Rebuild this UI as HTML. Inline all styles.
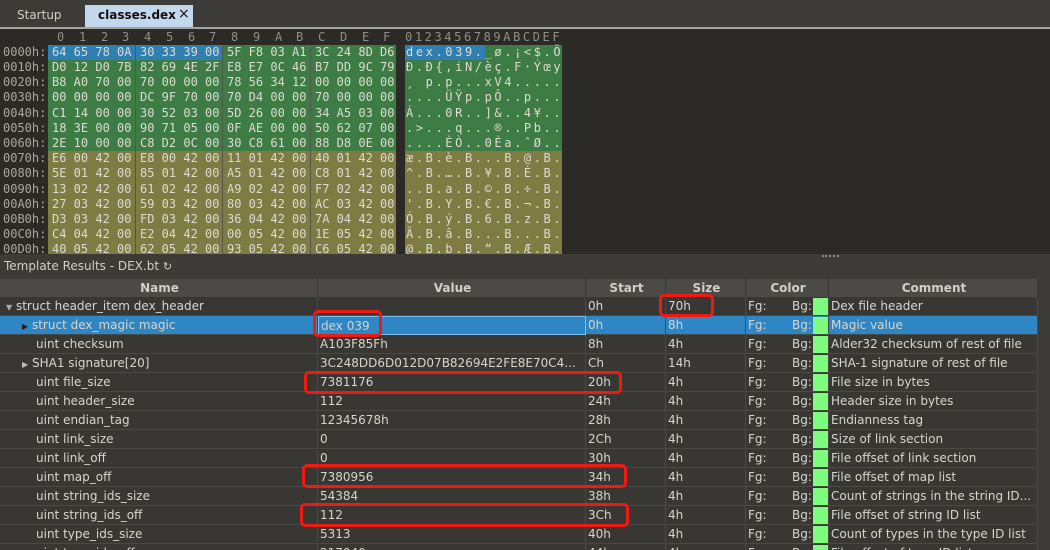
<!DOCTYPE html>
<html><head><meta charset="utf-8"><style>
*{margin:0;padding:0;box-sizing:border-box}
html,body{width:1050px;height:550px;overflow:hidden}
body{background:#2b2a26;position:relative;font-family:"DejaVu Sans","Liberation Sans",sans-serif;font-size:12px;color:#d6d6cc}
.abs{position:absolute}
#tabs{left:0;top:0;width:1050px;height:27px;background:#3c3b37}
#tabline{left:0;top:27px;width:1050px;height:2px;background:#a4a4a0}
.mono{font-family:"DejaVu Sans Mono","Liberation Mono",monospace;font-size:12px;white-space:pre}
.hl{position:absolute;top:29px;height:16px;line-height:16px;color:#8f8f88;font-family:"DejaVu Sans Mono","Liberation Mono",monospace;font-size:12px;white-space:pre}
.hr{position:absolute;left:0;height:15px;line-height:15px;width:570px}
.addr{position:absolute;left:3px;color:#a8a8a0}
.g{position:absolute;top:0;height:15px;width:87px;padding-left:4px;color:#dcdcd0}
.asc{position:absolute;left:405px;width:157px;height:15px;padding-left:1px;letter-spacing:2.6px;color:#dcdcd0}
.row{position:absolute;left:0;width:1038px;height:19px;line-height:19px;background:#383733;border-bottom:1px solid #4a4945}
.c{position:absolute;top:0;height:19px;border-right:1px solid #4a4945;padding-left:2px;white-space:nowrap;overflow:hidden}
.sw{position:absolute;left:813px;top:1px;width:15px;height:17px;background:#7ffc7f}
.red{position:absolute;border:3px solid #f01a12;border-radius:5px}
</style></head><body>
<div id="tabs" class="abs">
<div class="abs" style="left:17px;top:8px;color:#cfcfc8;font-size:12px">Startup</div>
<div class="abs" style="left:85px;top:5px;width:108px;height:24px;background:#c3d7ed"></div>
<div class="abs" style="left:98px;top:8px;color:#111;font-weight:bold;font-size:12px">classes.dex</div>
<div class="abs" style="left:178px;top:6px;color:#111;font-size:14px">×</div>
</div>
<div id="tabline" class="abs"></div>

<div class="hl" style="left:57px">0</div><div class="hl" style="left:79px">1</div><div class="hl" style="left:101px">2</div><div class="hl" style="left:122px">3</div><div class="hl" style="left:144px">4</div><div class="hl" style="left:166px">5</div><div class="hl" style="left:188px">6</div><div class="hl" style="left:209px">7</div><div class="hl" style="left:231px">8</div><div class="hl" style="left:253px">9</div><div class="hl" style="left:275px">A</div><div class="hl" style="left:296px">B</div><div class="hl" style="left:318px">C</div><div class="hl" style="left:340px">D</div><div class="hl" style="left:362px">E</div><div class="hl" style="left:383px">F</div>
<div class="hl" style="left:405px;letter-spacing:2.6px">0123456789ABCDEF</div>

<!-- backgrounds -->
<div class="abs" style="left:48px;top:45px;width:348px;height:106px;background:#3d7d45"></div>
<div class="abs" style="left:48px;top:151px;width:348px;height:103px;background:#7e7b43"></div>
<div class="abs" style="left:48px;top:45px;width:174px;height:15px;background:#2f7fb3"></div>
<div class="abs" style="left:405px;top:45px;width:157px;height:106px;background:#3d7d45"></div>
<div class="abs" style="left:405px;top:151px;width:157px;height:103px;background:#7e7b43"></div>
<div class="abs" style="left:405px;top:45px;width:80px;height:15px;background:#2f7fb3"></div>

<div class="abs mono" style="left:0;top:45px;width:570px;height:210px">
<div class="hr" style="top:0"><span class="addr">0000h:</span><div class="g" style="left:48px">64 65 78 0A</div><div class="g" style="left:136px">30 33 39 00</div><div class="g" style="left:223px">5F F8 03 A1</div><div class="g" style="left:311px">3C 24 8D D6</div><div class="asc">dex.039._ø.¡&lt;$.Ö</div></div>
<div class="hr" style="top:15px"><span class="addr">0010h:</span><div class="g" style="left:48px">D0 12 D0 7B</div><div class="g" style="left:136px">82 69 4E 2F</div><div class="g" style="left:223px">E8 E7 0C 46</div><div class="g" style="left:311px">B7 DD 9C 79</div><div class="asc">Ð.Ð{,iN/èç.F·Ýœy</div></div>
<div class="hr" style="top:30.2px"><span class="addr">0020h:</span><div class="g" style="left:48px">B8 A0 70 00</div><div class="g" style="left:136px">70 00 00 00</div><div class="g" style="left:223px">78 56 34 12</div><div class="g" style="left:311px">00 00 00 00</div><div class="asc">¸ p.p...xV4.....</div></div>
<div class="hr" style="top:45.4px"><span class="addr">0030h:</span><div class="g" style="left:48px">00 00 00 00</div><div class="g" style="left:136px">DC 9F 70 00</div><div class="g" style="left:223px">70 D4 00 00</div><div class="g" style="left:311px">70 00 00 00</div><div class="asc">....ÜŸp.pÔ..p...</div></div>
<div class="hr" style="top:60.6px"><span class="addr">0040h:</span><div class="g" style="left:48px">C1 14 00 00</div><div class="g" style="left:136px">30 52 03 00</div><div class="g" style="left:223px">5D 26 00 00</div><div class="g" style="left:311px">34 A5 03 00</div><div class="asc">Á...0R..]&amp;..4¥..</div></div>
<div class="hr" style="top:75.8px"><span class="addr">0050h:</span><div class="g" style="left:48px">18 3E 00 00</div><div class="g" style="left:136px">90 71 05 00</div><div class="g" style="left:223px">0F AE 00 00</div><div class="g" style="left:311px">50 62 07 00</div><div class="asc">.&gt;...q...®..Pb..</div></div>
<div class="hr" style="top:91px"><span class="addr">0060h:</span><div class="g" style="left:48px">2E 10 00 00</div><div class="g" style="left:136px">C8 D2 0C 00</div><div class="g" style="left:223px">30 C8 61 00</div><div class="g" style="left:311px">88 D8 0E 00</div><div class="asc">....ÈÒ..0Èa.ˆØ..</div></div>
<div class="hr" style="top:106.2px"><span class="addr">0070h:</span><div class="g" style="left:48px">E6 00 42 00</div><div class="g" style="left:136px">E8 00 42 00</div><div class="g" style="left:223px">11 01 42 00</div><div class="g" style="left:311px">40 01 42 00</div><div class="asc">æ.B.è.B...B.@.B.</div></div>
<div class="hr" style="top:121.4px"><span class="addr">0080h:</span><div class="g" style="left:48px">5E 01 42 00</div><div class="g" style="left:136px">85 01 42 00</div><div class="g" style="left:223px">A5 01 42 00</div><div class="g" style="left:311px">C8 01 42 00</div><div class="asc">^.B.….B.¥.B.È.B.</div></div>
<div class="hr" style="top:136.6px"><span class="addr">0090h:</span><div class="g" style="left:48px">13 02 42 00</div><div class="g" style="left:136px">61 02 42 00</div><div class="g" style="left:223px">A9 02 42 00</div><div class="g" style="left:311px">F7 02 42 00</div><div class="asc">..B.a.B.©.B.÷.B.</div></div>
<div class="hr" style="top:151.8px"><span class="addr">00A0h:</span><div class="g" style="left:48px">27 03 42 00</div><div class="g" style="left:136px">59 03 42 00</div><div class="g" style="left:223px">80 03 42 00</div><div class="g" style="left:311px">AC 03 42 00</div><div class="asc">'.B.Y.B.€.B.¬.B.</div></div>
<div class="hr" style="top:167px"><span class="addr">00B0h:</span><div class="g" style="left:48px">D3 03 42 00</div><div class="g" style="left:136px">FD 03 42 00</div><div class="g" style="left:223px">36 04 42 00</div><div class="g" style="left:311px">7A 04 42 00</div><div class="asc">Ó.B.ý.B.6.B.z.B.</div></div>
<div class="hr" style="top:182.2px"><span class="addr">00C0h:</span><div class="g" style="left:48px">C4 04 42 00</div><div class="g" style="left:136px">E2 04 42 00</div><div class="g" style="left:223px">00 05 42 00</div><div class="g" style="left:311px">1E 05 42 00</div><div class="asc">Ä.B.â.B...B...B.</div></div>
<div class="hr" style="top:197.4px"><span class="addr">00D0h:</span><div class="g" style="left:48px">40 05 42 00</div><div class="g" style="left:136px">62 05 42 00</div><div class="g" style="left:223px">93 05 42 00</div><div class="g" style="left:311px">C6 05 42 00</div><div class="asc">@.B.b.B.“.B.Æ.B.</div></div>
</div>
<div class="abs" style="left:135px;top:45px;width:1px;height:209px;background:#55554f"></div>
<div class="abs" style="left:222px;top:45px;width:1px;height:209px;background:#55554f"></div>
<div class="abs" style="left:310px;top:45px;width:1px;height:209px;background:#55554f"></div>

<div class="abs" style="left:0;top:254px;width:1050px;height:296px;background:#3c3b37"></div>
<div class="abs" style="left:822px;top:255px;width:17px;height:2px;border-top:2px dotted #8a8a85"></div>
<div class="abs" style="left:4px;top:259px;color:#d0d0c8;font-size:12px">Template Results - DEX.bt <span style="font-size:11px">↻</span></div>

<div class="abs" style="left:0;top:279px;width:1038px;height:18px;background:#4b4a47;font-weight:bold;color:#d0d0c8;line-height:18px">
<div class="c" style="left:0;width:318px;text-align:center;border-color:#3a3935">Name</div>
<div class="c" style="left:318px;width:268px;text-align:center;border-color:#3a3935">Value</div>
<div class="c" style="left:586px;width:80px;text-align:center;border-color:#3a3935">Start</div>
<div class="c" style="left:666px;width:80px;text-align:center;border-color:#3a3935">Size</div>
<div class="c" style="left:746px;width:83px;text-align:center;border-color:#3a3935">Color</div>
<div class="c" style="left:829px;width:209px;text-align:center;border-color:#3a3935">Comment</div>
</div>

<div class="abs" style="left:0;top:297px;width:1038px;height:253px;overflow:hidden">
<div class="row" style="top:0"><div class="c" style="left:0;width:318px;padding-left:6px"><span style="font-size:8px;color:#aaa">▼</span> struct header_item dex_header</div><div class="c" style="left:318px;width:268px"></div><div class="c" style="left:586px;width:80px">0h</div><div class="c" style="left:666px;width:80px">70h</div><div class="c" style="left:746px;width:83px">Fg:<span style="position:absolute;left:46px">Bg:</span></div><div class="sw"></div><div class="c" style="left:829px;width:209px">Dex file header</div></div>
<div class="row" style="top:19px;background:#2f86c4"><div class="c" style="left:0;width:318px;padding-left:22px"><span style="font-size:8px;color:#222">▶</span> struct dex_magic magic</div><div class="c" style="left:318px;width:268px;border:1px solid #7cc0f0">dex 039</div><div class="c" style="left:586px;width:80px">0h</div><div class="c" style="left:666px;width:80px">8h</div><div class="c" style="left:746px;width:83px">Fg:<span style="position:absolute;left:46px">Bg:</span></div><div class="sw"></div><div class="c" style="left:829px;width:209px">Magic value</div></div>
<div class="row" style="top:38px"><div class="c" style="left:0;width:318px;padding-left:36px">uint checksum</div><div class="c" style="left:318px;width:268px">A103F85Fh</div><div class="c" style="left:586px;width:80px">8h</div><div class="c" style="left:666px;width:80px">4h</div><div class="c" style="left:746px;width:83px">Fg:<span style="position:absolute;left:46px">Bg:</span></div><div class="sw"></div><div class="c" style="left:829px;width:209px">Alder32 checksum of rest of file</div></div>
<div class="row" style="top:57px"><div class="c" style="left:0;width:318px;padding-left:22px"><span style="font-size:8px;color:#bbb">▶</span> SHA1 signature[20]</div><div class="c" style="left:318px;width:268px">3C248DD6D012D07B82694E2FE8E70C4...</div><div class="c" style="left:586px;width:80px">Ch</div><div class="c" style="left:666px;width:80px">14h</div><div class="c" style="left:746px;width:83px">Fg:<span style="position:absolute;left:46px">Bg:</span></div><div class="sw"></div><div class="c" style="left:829px;width:209px">SHA-1 signature of rest of file</div></div>
<div class="row" style="top:76px"><div class="c" style="left:0;width:318px;padding-left:36px">uint file_size</div><div class="c" style="left:318px;width:268px">7381176</div><div class="c" style="left:586px;width:80px">20h</div><div class="c" style="left:666px;width:80px">4h</div><div class="c" style="left:746px;width:83px">Fg:<span style="position:absolute;left:46px">Bg:</span></div><div class="sw"></div><div class="c" style="left:829px;width:209px">File size in bytes</div></div>
<div class="row" style="top:95px"><div class="c" style="left:0;width:318px;padding-left:36px">uint header_size</div><div class="c" style="left:318px;width:268px">112</div><div class="c" style="left:586px;width:80px">24h</div><div class="c" style="left:666px;width:80px">4h</div><div class="c" style="left:746px;width:83px">Fg:<span style="position:absolute;left:46px">Bg:</span></div><div class="sw"></div><div class="c" style="left:829px;width:209px">Header size in bytes</div></div>
<div class="row" style="top:114px"><div class="c" style="left:0;width:318px;padding-left:36px">uint endian_tag</div><div class="c" style="left:318px;width:268px">12345678h</div><div class="c" style="left:586px;width:80px">28h</div><div class="c" style="left:666px;width:80px">4h</div><div class="c" style="left:746px;width:83px">Fg:<span style="position:absolute;left:46px">Bg:</span></div><div class="sw"></div><div class="c" style="left:829px;width:209px">Endianness tag</div></div>
<div class="row" style="top:133px"><div class="c" style="left:0;width:318px;padding-left:36px">uint link_size</div><div class="c" style="left:318px;width:268px">0</div><div class="c" style="left:586px;width:80px">2Ch</div><div class="c" style="left:666px;width:80px">4h</div><div class="c" style="left:746px;width:83px">Fg:<span style="position:absolute;left:46px">Bg:</span></div><div class="sw"></div><div class="c" style="left:829px;width:209px">Size of link section</div></div>
<div class="row" style="top:152px"><div class="c" style="left:0;width:318px;padding-left:36px">uint link_off</div><div class="c" style="left:318px;width:268px">0</div><div class="c" style="left:586px;width:80px">30h</div><div class="c" style="left:666px;width:80px">4h</div><div class="c" style="left:746px;width:83px">Fg:<span style="position:absolute;left:46px">Bg:</span></div><div class="sw"></div><div class="c" style="left:829px;width:209px">File offset of link section</div></div>
<div class="row" style="top:171px"><div class="c" style="left:0;width:318px;padding-left:36px">uint map_off</div><div class="c" style="left:318px;width:268px">7380956</div><div class="c" style="left:586px;width:80px">34h</div><div class="c" style="left:666px;width:80px">4h</div><div class="c" style="left:746px;width:83px">Fg:<span style="position:absolute;left:46px">Bg:</span></div><div class="sw"></div><div class="c" style="left:829px;width:209px">File offset of map list</div></div>
<div class="row" style="top:190px"><div class="c" style="left:0;width:318px;padding-left:36px">uint string_ids_size</div><div class="c" style="left:318px;width:268px">54384</div><div class="c" style="left:586px;width:80px">38h</div><div class="c" style="left:666px;width:80px">4h</div><div class="c" style="left:746px;width:83px">Fg:<span style="position:absolute;left:46px">Bg:</span></div><div class="sw"></div><div class="c" style="left:829px;width:209px">Count of strings in the string ID...</div></div>
<div class="row" style="top:209px"><div class="c" style="left:0;width:318px;padding-left:36px">uint string_ids_off</div><div class="c" style="left:318px;width:268px">112</div><div class="c" style="left:586px;width:80px">3Ch</div><div class="c" style="left:666px;width:80px">4h</div><div class="c" style="left:746px;width:83px">Fg:<span style="position:absolute;left:46px">Bg:</span></div><div class="sw"></div><div class="c" style="left:829px;width:209px">File offset of string ID list</div></div>
<div class="row" style="top:228px"><div class="c" style="left:0;width:318px;padding-left:36px">uint type_ids_size</div><div class="c" style="left:318px;width:268px">5313</div><div class="c" style="left:586px;width:80px">40h</div><div class="c" style="left:666px;width:80px">4h</div><div class="c" style="left:746px;width:83px">Fg:<span style="position:absolute;left:46px">Bg:</span></div><div class="sw"></div><div class="c" style="left:829px;width:209px">Count of types in the type ID list</div></div>
<div class="row" style="top:247px"><div class="c" style="left:0;width:318px;padding-left:36px">uint type_ids_off</div><div class="c" style="left:318px;width:268px">217040</div><div class="c" style="left:586px;width:80px">44h</div><div class="c" style="left:666px;width:80px">4h</div><div class="c" style="left:746px;width:83px">Fg:<span style="position:absolute;left:46px">Bg:</span></div><div class="sw"></div><div class="c" style="left:829px;width:209px">File offset of type ID list</div></div>
</div>

<div class="red" style="left:659px;top:294px;width:55px;height:23px"></div>
<div class="red" style="left:313px;top:310px;width:69px;height:27px"></div>
<div class="red" style="left:304px;top:371px;width:318px;height:23px"></div>
<div class="red" style="left:302px;top:464px;width:325px;height:24px"></div>
<div class="red" style="left:300px;top:503px;width:329px;height:24px"></div>
</body></html>
